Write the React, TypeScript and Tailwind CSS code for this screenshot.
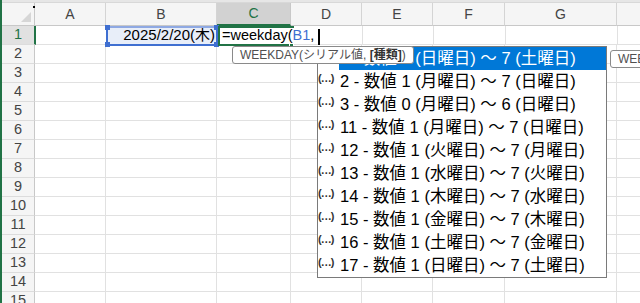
import React from 'react'

const cols = [
  { k: 'A', w: 'w-[71px]' },
  { k: 'B', w: 'w-[111px]' },
  { k: 'C', w: 'w-[74px]' },
  { k: 'D', w: 'w-[71px]' },
  { k: 'E', w: 'w-[71px]' },
  { k: 'F', w: 'w-[72px]' },
  { k: 'G', w: 'w-[112px]' },
  { k: 'H', w: 'w-[100px]' },
]

const rows = Array.from({ length: 15 }, (_, i) => i + 1)

const options = [
  ['1', '日曜日', '7', '土曜日', '1'],
  ['2', '月曜日', '7', '日曜日', '1'],
  ['3', '月曜日', '6', '日曜日', '0'],
  ['11', '月曜日', '7', '日曜日', '1'],
  ['12', '火曜日', '7', '月曜日', '1'],
  ['13', '水曜日', '7', '火曜日', '1'],
  ['14', '木曜日', '7', '水曜日', '1'],
  ['15', '金曜日', '7', '木曜日', '1'],
  ['16', '土曜日', '7', '金曜日', '1'],
  ['17', '日曜日', '7', '土曜日', '1'],
]

const font = { fontFamily: '"Liberation Sans", "Noto Sans CJK JP", sans-serif' }

function Tip() {
  return (
    <div className="h-[18px] px-[7px] bg-white border border-[#8a8a8a] rounded-[3px] text-[12px] leading-[16px] text-[#505050] whitespace-nowrap">
      WEEKDAY(シリアル値, <span className="font-bold text-[#333]">[種類]</span>)
    </div>
  )
}

export default function App() {
  return (
    <div className="relative w-[640px] h-[303px] overflow-hidden bg-white border-l-2 border-[#217346] select-none" style={font}>
      <div className="h-[3px] bg-[#e6e6e6] border-b border-[#d8d8d8]" />
      {/* column headers */}
      <div className="flex h-[23px] bg-[#f5f5f5]">
        <div className="relative w-[33px] shrink-0 border-r border-b border-[#c8c8c8]">
          <div className="absolute right-[3px] bottom-[3px] w-0 h-0 border-l-[10px] border-l-transparent border-b-[10px] border-b-[#d6d6d6]" />
          <div className="absolute right-[-1px] top-[3px] w-[2px] h-[2px] bg-black" />
        </div>
        {cols.map((c) => (
          <div key={c.k}
            className={`${c.w} shrink-0 flex items-center justify-center text-[14px] border-r ${
              c.k === 'C' ? 'bg-[#d2d2d2] text-[#217346] border-b-2 border-b-[#217346] border-r-[#c8c8c8]' : 'text-[#444] border-b border-[#d4d4d4] border-b-[#c8c8c8]'
            }`}>
            {c.k}
          </div>
        ))}
      </div>
      {/* rows */}
      {rows.map((r) => (
        <div key={r} className="flex h-[19px]">
          <div className={`w-[33px] shrink-0 flex items-center justify-center text-[14.5px] border-b border-[#dcdcdc] ${
            r === 1 ? 'bg-[#e1e1e1] text-[#217346] border-r-2 border-r-[#217346] w-[34px]' : 'bg-[#f5f5f5] text-[#444] border-r border-r-[#c8c8c8]'
          }`}>
            {r}
          </div>
          {cols.map((c) => (
            <div key={c.k}
              className={`${c.w} shrink-0 border-r border-b border-[#e1e1e1] ${r === 1 && c.k === 'A' ? 'w-[70px]' : ''} ${r === 1 && c.k === 'B' ? 'bg-[#e8eef9] flex items-center justify-end pr-[2px] text-[15px] text-black' : ''}`}>
              {r === 1 && c.k === 'B' ? '2025/2/20(木)' : null}
            </div>
          ))}
        </div>
      ))}

      {/* B1 reference highlight */}
      <div className="absolute left-[104px] top-[26px] w-[112px] h-[20px] border-2 border-[#3f6fd1] border-t-[#8fa9e3]">
        <div className="absolute -left-[3px] -top-[3px] w-[5px] h-[5px] bg-[#3f6fd1]" />
        <div className="absolute -right-[3px] -top-[3px] w-[5px] h-[5px] bg-[#3f6fd1]" />
        <div className="absolute -left-[3px] -bottom-[3px] w-[5px] h-[5px] bg-[#3f6fd1]" />
        <div className="absolute -right-[3px] -bottom-[3px] w-[5px] h-[5px] bg-[#3f6fd1]" />
      </div>

      {/* C1 active cell in edit mode */}
      <div className="absolute left-[218px] top-[28px] w-[98px] h-[16px] bg-white" />
      <div className="absolute left-[216px] top-[26px] w-[76px] h-[20px] border-t-2 border-b-2 border-l-2 border-[#217346]" />
      <div className="absolute left-[287px] top-[43px] w-[5px] h-[5px] bg-[#217346] border border-white" />
      <div className="absolute left-[220px] top-[27px] h-[18px] flex items-center text-[14.5px] text-black whitespace-nowrap">
        =weekday(<span className="text-[#3f6fd1]">B1</span>,
      </div>
      <div className="absolute left-[316px] top-[29px] w-[2px] h-[16px] bg-black" />

      {/* autocomplete list */}
      <div className="absolute left-[315px] top-[46px] w-[290px] bg-white border border-[#7a7a7a]">
        {options.map((o, i) => (
          <div key={i} className="flex h-[23px]">
            <div className="w-[21px] shrink-0 flex items-start pt-[3px] text-[11px] leading-none font-bold text-[#333]">
              <span>(</span><span className="tracking-[-2px] -ml-[1px]">…</span><span className="ml-[1px]">)</span>
            </div>
            <div className={`flex-1 pl-[1px] text-[16.5px] leading-[23px] whitespace-nowrap ${i === 0 ? 'bg-[#0078d7] text-white' : 'text-black'}`}>
              {o[0]} - 数値 {o[4]} ({o[1]}) ～ {o[2]} ({o[3]})
            </div>
          </div>
        ))}
      </div>

      {/* argument tooltip */}
      <div className="absolute left-[230px] top-[46px]">
        <Tip />
      </div>
      <div className="absolute left-[608px] top-[50px]">
        <Tip />
      </div>
    </div>
  )
}
